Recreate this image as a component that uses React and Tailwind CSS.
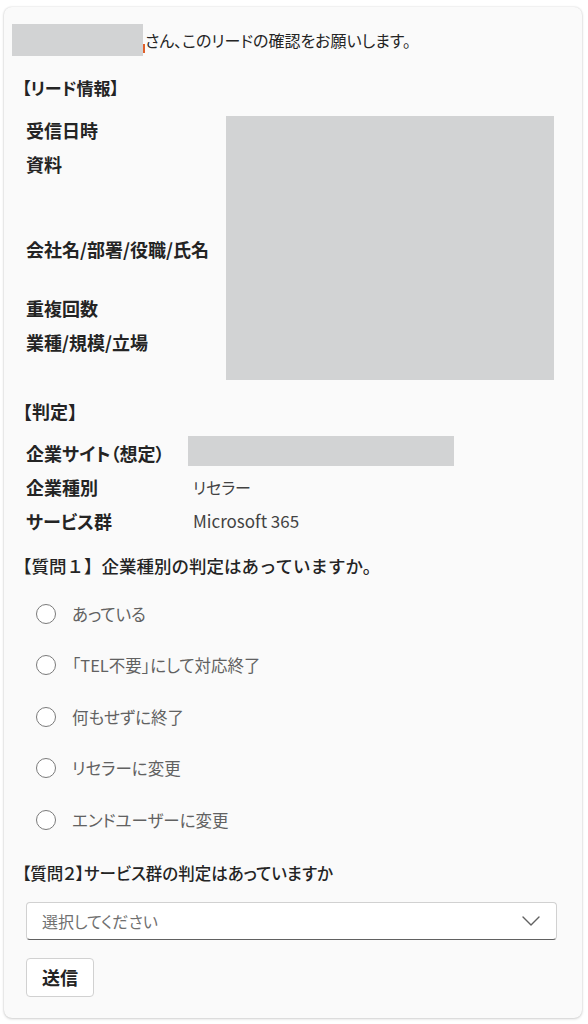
import React from "react";

const font = "font-['Noto_Sans_CJK_JP','Noto_Sans',sans-serif] [font-feature-settings:'palt']";
const nopalt = "[font-feature-settings:normal]";

function Radio({ label }) {
  return (
    <div className="flex h-[51.5px] items-center">
      <div className="ml-[10px] h-[20px] w-[20px] rounded-full border-[1.5px] border-[#7a7a7a] bg-white" />
      <span className="ml-[16px] text-[16.5px] leading-[24px] text-[#616161]">{label}</span>
    </div>
  );
}

export default function App() {
  return (
    <div className={`min-h-[1024px] bg-white pl-[4px] pr-[6px] pt-[7px] ${font}`}>
      <div className="w-[578px] rounded-[8px] bg-[#fafafa] pb-[21px] pl-[22px] pr-[25px] pt-[17px] shadow-[0_0_2px_rgba(0,0,0,0.14),0_1px_3px_rgba(0,0,0,0.16)]">
        {/* greeting */}
        <div className="-ml-[14px] flex h-[32px] items-center">
          <div className="h-[32px] w-[131px] bg-[#d2d3d4]" />
          <div className="mb-[3px] h-[9px] w-[2px] self-end bg-[#e0602a]" />
          <span className="text-[16px] leading-[24px] text-[#242424]">さん、このリードの確認をお願いします。</span>
        </div>

        {/* heading 1 */}
        <div className="-ml-[4px] mt-[20px] text-[17px] font-bold leading-[24px] text-[#242424]">【リード情報】</div>

        <div className="mt-[13px] flex">
          <div className="flex w-[200px] flex-col text-[18px] font-bold text-[#242424]">
            <div className="h-[34px] leading-[34px]">受信日時</div>
            <div className="h-[85px] leading-[34px]">資料</div>
            <div className="h-[59px] leading-[34px]">会社名/部署/役職/氏名</div>
            <div className="h-[34px] leading-[34px]">重複回数</div>
            <div className="h-[34px] leading-[34px]">業種/規模/立場</div>
          </div>
          <div className="mt-[3px] h-[264px] w-[328px] bg-[#d2d3d4]" />
        </div>

        {/* heading 2 */}
        <div className={`-ml-[12px] mt-[19px] text-[18px] font-bold leading-[24px] text-[#242424] ${nopalt}`}>【判定】</div>

        <div className="mt-[13px] grid grid-cols-[162px_1fr] text-[17px] leading-[34px]">
          <div className="h-[34px] text-[18px] font-bold text-[#242424]">企業サイト（想定）</div>
          <div className="h-[34px]"><div className="h-[30px] w-[266px] bg-[#d2d3d4]" /></div>
          <div className="h-[34px] text-[18px] font-bold text-[#242424]">企業種別</div>
          <div className="h-[34px] pl-[5px] text-[16px] text-[#424242]">リセラー</div>
          <div className="h-[34px] text-[18px] font-bold text-[#242424]">サービス群</div>
          <div className="h-[34px] pl-[5px] text-[#424242]">Microsoft 365</div>
        </div>

        <div className={`-ml-[12px] mt-[16px] text-[17.5px] font-medium leading-[24px] text-[#242424] ${nopalt}`}>【質問１】企業種別の判定はあっていますか。</div>

        <div className="mt-[10px] flex flex-col">
          <Radio label="あっている" />
          <Radio label="「TEL不要」にして対応終了" />
          <Radio label="何もせずに終了" />
          <Radio label="リセラーに変更" />
          <Radio label="エンドユーザーに変更" />
        </div>

        <div className="-ml-[4px] mt-[15px] text-[16.5px] font-medium leading-[24px] text-[#242424]">【質問２】サービス群の判定はあっていますか</div>

        <div className="mt-[17px] flex h-[38px] items-center justify-between rounded-[4px] border border-[#d1d1d1] border-b-[#616161] bg-white pl-[15px] pr-[16px]">
          <span className="text-[16px] leading-[24px] text-[#707070]">選択してください</span>
          <svg width="18" height="10" viewBox="0 0 18 10" fill="none">
            <path d="M1 1 L9 9 L17 1" stroke="#616161" strokeWidth="1.4" strokeLinecap="round" strokeLinejoin="round" />
          </svg>
        </div>

        <div className="mt-[18px] flex">
          <button className="h-[39px] rounded-[4px] border border-[#d1d1d1] bg-white px-[15px] text-[18px] font-bold leading-[24px] text-[#242424]">送信</button>
        </div>
      </div>
    </div>
  );
}
